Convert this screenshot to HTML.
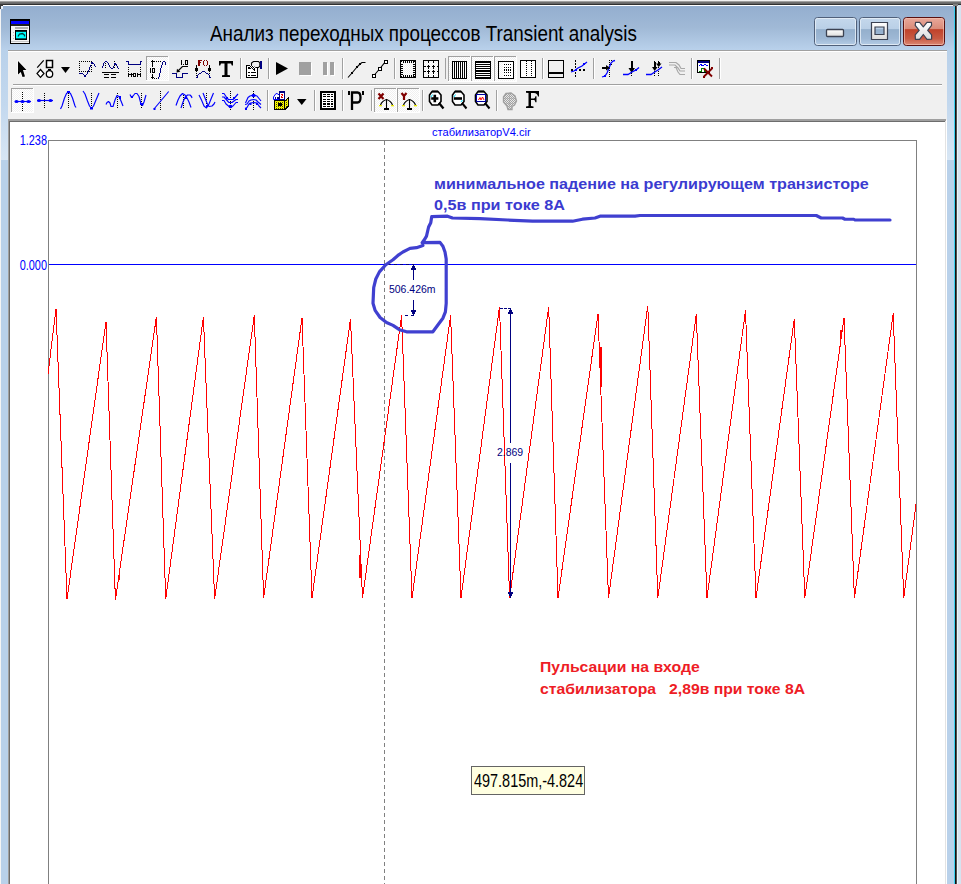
<!DOCTYPE html>
<html><head><meta charset="utf-8">
<style>
html,body{margin:0;padding:0;}
body{width:961px;height:884px;overflow:hidden;position:relative;background:#f0f0f0;font-family:"Liberation Sans",sans-serif;}
.a{position:absolute;white-space:nowrap;}
svg{position:absolute;left:0;top:0;}
#title{left:210px;top:21px;font-size:22px;line-height:26px;color:#000;transform-origin:0 0;transform:scaleX(0.856);}
#fname{left:432px;top:124.5px;font-size:11.5px;line-height:14px;color:#0000ff;transform-origin:0 0;transform:scaleX(0.965);}
.ylab{font-size:14px;line-height:14px;color:#0000ff;transform-origin:100% 0;transform:scaleX(0.78);text-align:right;}
.note{font-weight:bold;font-size:14.5px;line-height:18px;transform-origin:0 0;}
#n1{left:434px;top:175px;color:#3b3bd0;transform:scaleX(1.112);}
#n2{left:434px;top:196px;color:#3b3bd0;transform:scaleX(1.116);}
#n3{left:540px;top:658px;color:#ee1c25;transform:scaleX(1.087);}
#n4{left:540px;top:680px;color:#ee1c25;transform:scaleX(1.084);}
#tip{left:471px;top:766px;width:112px;height:27px;border:1px solid #646464;background:#ffffe1;}
#tipt{left:474px;top:770px;font-size:19px;line-height:22px;color:#000;transform-origin:0 0;transform:scaleX(0.76);}
.meas{font-size:11px;line-height:12px;color:#000080;transform-origin:0 0;transform:scaleX(0.95);}
</style></head><body>
<svg width="961" height="884" viewBox="0 0 961 884">
<defs>
<linearGradient id="gTitle" x1="0" y1="0" x2="0" y2="1">
<stop offset="0" stop-color="#93aecf"/><stop offset="0.5" stop-color="#a0b9d6"/><stop offset="1" stop-color="#b9d1eb"/>
</linearGradient>
<linearGradient id="gLeft" x1="0" y1="0" x2="0" y2="1"><stop offset="0" stop-color="#b9d1ea"/><stop offset="0.5" stop-color="#c3d8ee"/><stop offset="1" stop-color="#d8e6f4"/></linearGradient>
<pattern id="chk" x="0" y="0" width="2" height="2" patternUnits="userSpaceOnUse">
<rect width="2" height="2" fill="#ffffff"/><rect width="1" height="1" fill="#f0f0f0"/><rect x="1" y="1" width="1" height="1" fill="#f0f0f0"/>
</pattern>
<pattern id="dots" x="0" y="0" width="2" height="2" patternUnits="userSpaceOnUse">
<rect width="1" height="1" fill="#000"/>
</pattern>
<pattern id="gchk" x="0" y="0" width="2" height="2" patternUnits="userSpaceOnUse">
<rect width="2" height="2" fill="#e8e8e8"/><rect width="1" height="1" fill="#a0a0a0"/><rect x="1" y="1" width="1" height="1" fill="#a0a0a0"/>
</pattern>
<pattern id="bw" x="0" y="0" width="2" height="2" patternUnits="userSpaceOnUse">
<rect width="2" height="2" fill="#ffffff"/><rect width="1" height="1" fill="#000"/><rect x="1" y="1" width="1" height="1" fill="#000"/>
</pattern>
<pattern id="ychk" x="0" y="0" width="2" height="2" patternUnits="userSpaceOnUse">
<rect width="2" height="2" fill="#ffff00"/><rect width="1" height="1" fill="#404000"/><rect x="1" y="1" width="1" height="1" fill="#e0e000"/>
</pattern>
</defs>
<!-- screen strip -->
<g shape-rendering="crispEdges">
<rect x="0" y="0" width="961" height="1" fill="#f0f0f0"/>
<rect x="0" y="1" width="961" height="1" fill="#a0a0a0"/>
<rect x="0" y="2" width="961" height="1" fill="#707070"/>
<rect x="0" y="3" width="961" height="1" fill="#656565"/>
<rect x="0" y="4" width="961" height="1" fill="#303030"/>
<rect x="0" y="5" width="957" height="45" fill="url(#gTitle)"/>
<rect x="3" y="5" width="952" height="1" fill="#ffffff"/>
<rect x="0" y="4" width="3" height="5" fill="#3a3a3a"/><rect x="1" y="6" width="2" height="3" fill="#e8eef6"/>
<rect x="0" y="50" width="8" height="834" fill="#b9d1ea"/>
<rect x="1" y="50" width="7" height="110" fill="url(#gLeft)"/>
<rect x="0" y="9" width="1" height="875" fill="#f5f5f5"/>
<rect x="947" y="50" width="8" height="834" fill="#b9d1ea"/>
<rect x="947" y="50" width="7" height="110" fill="url(#gLeft)"/>
<rect x="954" y="7" width="1" height="877" fill="#3ad0f0"/>
<rect x="955" y="5" width="1" height="879" fill="#111111"/>
<rect x="956" y="5" width="1" height="879" fill="#505050"/>
<rect x="957" y="5" width="4" height="879" fill="#d6e3f0"/>
<rect x="957" y="5" width="1" height="879" fill="#eef3f8"/>
<rect x="953" y="4" width="5" height="2" fill="#808080"/>
<rect x="8" y="50" width="939" height="70" fill="#f0f0f0"/>
<rect x="8" y="50" width="939" height="1" fill="#a0a0a0"/>
<rect x="8" y="51" width="939" height="1" fill="#ffffff"/>
<rect x="13" y="84" width="929" height="1" fill="#a0a0a0"/>
<rect x="13" y="85" width="929" height="1" fill="#ffffff"/>
<rect x="8" y="119" width="938" height="765" fill="#a0a0a0"/>
<rect x="9" y="121" width="937" height="763" fill="#6d6d6d"/>
<rect x="10" y="122" width="935" height="762" fill="#ffffff"/>
<rect x="945" y="121" width="1" height="763" fill="#e3e3e3"/>
<rect x="946" y="120" width="1" height="764" fill="#ffffff"/>
</g>
<g shape-rendering="crispEdges"><g id="tb1">
<!-- selected button backgrounds -->
<rect x="146" y="56" width="22" height="24" fill="url(#chk)"/>
<rect x="146" y="56" width="22" height="1" fill="#a0a0a0"/><rect x="146" y="56" width="1" height="24" fill="#a0a0a0"/>
<rect x="146" y="80" width="23" height="1" fill="#fff"/><rect x="168" y="56" width="1" height="25" fill="#fff"/>
<rect x="448" y="56" width="22" height="25" fill="url(#chk)"/>
<rect x="448" y="56" width="22" height="1" fill="#a0a0a0"/><rect x="448" y="56" width="1" height="25" fill="#a0a0a0"/>
<rect x="448" y="81" width="23" height="1" fill="#fff"/><rect x="470" y="56" width="1" height="26" fill="#fff"/>
<rect x="471" y="56" width="22" height="25" fill="url(#chk)"/>
<rect x="471" y="56" width="22" height="1" fill="#a0a0a0"/><rect x="471" y="56" width="1" height="25" fill="#a0a0a0"/>
<rect x="471" y="81" width="23" height="1" fill="#fff"/><rect x="493" y="56" width="1" height="26" fill="#fff"/>
<rect x="494" y="56" width="22" height="25" fill="url(#chk)"/>
<rect x="494" y="56" width="22" height="1" fill="#a0a0a0"/><rect x="494" y="56" width="1" height="25" fill="#a0a0a0"/>
<rect x="494" y="81" width="23" height="1" fill="#fff"/><rect x="516" y="56" width="1" height="26" fill="#fff"/>
<!-- separators -->
<g fill="#a0a0a0">
<rect x="240" y="58" width="1" height="21"/><rect x="268" y="58" width="1" height="21"/>
<rect x="342" y="58" width="1" height="21"/><rect x="394" y="58" width="1" height="21"/>
<rect x="445" y="58" width="1" height="21"/><rect x="542" y="58" width="1" height="21"/>
<rect x="593" y="58" width="1" height="21"/><rect x="691" y="58" width="1" height="21"/>
<rect x="719" y="58" width="1" height="21"/>
</g>
<g fill="#ffffff">
<rect x="241" y="58" width="1" height="21"/><rect x="269" y="58" width="1" height="21"/>
<rect x="343" y="58" width="1" height="21"/><rect x="395" y="58" width="1" height="21"/>
<rect x="543" y="58" width="1" height="21"/>
<rect x="594" y="58" width="1" height="21"/><rect x="692" y="58" width="1" height="21"/>
<rect x="720" y="58" width="1" height="21"/>
</g>
<!-- 1 arrow -->
<polygon points="18,61 26.5,70 23,70 25,76.5 22.5,77 20.8,72 18,74.5" fill="#000" stroke="#fff" stroke-width="1.2" paint-order="stroke" stroke-linejoin="round" shape-rendering="auto"/>
<!-- 2 shapes -->
<g shape-rendering="auto">
<line x1="37.2" y1="67.6" x2="43.7" y2="60.4" stroke="#000" stroke-width="1.2"/>
<rect x="46.5" y="60.5" width="6" height="7" fill="#fff" stroke="#000" stroke-width="1.5"/>
<polygon points="40.5,69.5 44,73.5 40.5,77.3 37,73.5" fill="#fff" stroke="#000" stroke-width="1.2"/>
<ellipse cx="49.5" cy="74" rx="3.2" ry="3.4" fill="#fff" stroke="#000" stroke-width="1.3"/>
<rect x="48" y="69" width="3" height="1.5" fill="#000"/>
</g>
<!-- 3 dropdown -->
<polygon points="61,67 70,67 65.5,73" fill="#000" shape-rendering="auto"/>
<!-- 4 dotted rect + curve -->
<rect x="79" y="61" width="1" height="1" fill="#000"/>
<rect x="79" y="71" width="1" height="1" fill="#000"/>
<rect x="81" y="61" width="1" height="1" fill="#000"/>
<rect x="81" y="71" width="1" height="1" fill="#000"/>
<rect x="83" y="61" width="1" height="1" fill="#000"/>
<rect x="83" y="71" width="1" height="1" fill="#000"/>
<rect x="85" y="61" width="1" height="1" fill="#000"/>
<rect x="85" y="71" width="1" height="1" fill="#000"/>
<rect x="87" y="61" width="1" height="1" fill="#000"/>
<rect x="87" y="71" width="1" height="1" fill="#000"/>
<rect x="89" y="61" width="1" height="1" fill="#000"/>
<rect x="89" y="71" width="1" height="1" fill="#000"/>
<rect x="91" y="61" width="1" height="1" fill="#000"/>
<rect x="91" y="71" width="1" height="1" fill="#000"/>
<rect x="79" y="63" width="1" height="1" fill="#000"/>
<rect x="91" y="63" width="1" height="1" fill="#000"/>
<rect x="79" y="65" width="1" height="1" fill="#000"/>
<rect x="91" y="65" width="1" height="1" fill="#000"/>
<rect x="79" y="67" width="1" height="1" fill="#000"/>
<rect x="91" y="67" width="1" height="1" fill="#000"/>
<rect x="79" y="69" width="1" height="1" fill="#000"/>
<rect x="91" y="69" width="1" height="1" fill="#000"/>
<rect x="79" y="73" width="4" height="1" fill="#000080"/>
<rect x="83" y="74" width="1" height="1" fill="#000080"/>
<rect x="84" y="75" width="2" height="2" fill="#000080"/>
<rect x="86" y="74" width="1" height="1" fill="#000080"/>
<rect x="87" y="72" width="1" height="2" fill="#000080"/>
<rect x="88" y="70" width="1" height="2" fill="#000080"/>
<rect x="89" y="67" width="1" height="3" fill="#000080"/>
<rect x="90" y="65" width="1" height="2" fill="#000080"/>
<rect x="91" y="62" width="2" height="2" fill="#000080"/>
<rect x="93" y="63" width="1" height="1" fill="#000080"/>
<rect x="94" y="64" width="1" height="2" fill="#000080"/>
<rect x="95" y="66" width="1" height="1" fill="#000080"/>
<rect x="105" y="61" width="1" height="1" fill="#000"/>
<rect x="114" y="61" width="1" height="1" fill="#000"/>
<rect x="105" y="63" width="1" height="1" fill="#000"/>
<rect x="114" y="63" width="1" height="1" fill="#000"/>
<rect x="105" y="65" width="1" height="1" fill="#000"/>
<rect x="114" y="65" width="1" height="1" fill="#000"/>
<rect x="105" y="67" width="1" height="1" fill="#000"/>
<rect x="114" y="67" width="1" height="1" fill="#000"/>
<rect x="102" y="66" width="1" height="2" fill="#000080"/>
<rect x="103" y="63" width="1" height="3" fill="#000080"/>
<rect x="104" y="62" width="1" height="1" fill="#000080"/>
<rect x="105" y="61" width="2" height="1" fill="#000080"/>
<rect x="107" y="62" width="1" height="1" fill="#000080"/>
<rect x="108" y="63" width="1" height="2" fill="#000080"/>
<rect x="109" y="65" width="1" height="2" fill="#000080"/>
<rect x="110" y="67" width="1" height="1" fill="#000080"/>
<rect x="111" y="68" width="2" height="1" fill="#000080"/>
<rect x="113" y="66" width="1" height="2" fill="#000080"/>
<rect x="114" y="63" width="2" height="2" fill="#000080"/>
<rect x="116" y="64" width="1" height="2" fill="#000080"/>
<rect x="117" y="66" width="1" height="2" fill="#000080"/>
<rect x="118" y="68" width="1" height="1" fill="#000080"/>
<rect x="102" y="72" width="17" height="1" fill="#000"/>
<rect x="104" y="74" width="5" height="1" fill="#000"/>
<rect x="111" y="74" width="5" height="1" fill="#000"/>
<rect x="104" y="77" width="5" height="1" fill="#000"/>
<rect x="111" y="77" width="5" height="1" fill="#000"/>
<rect x="126" y="61" width="3" height="1" fill="#000080"/>
<rect x="128" y="61" width="1" height="4" fill="#000080"/>
<rect x="128" y="64" width="13" height="1" fill="#000080"/>
<rect x="140" y="61" width="1" height="4" fill="#000080"/>
<rect x="140" y="61" width="2" height="1" fill="#000080"/>
<rect x="128" y="67" width="1" height="1" fill="#000"/>
<rect x="140" y="67" width="1" height="1" fill="#000"/>
<rect x="128" y="69" width="1" height="1" fill="#000"/>
<rect x="140" y="69" width="1" height="1" fill="#000"/>
<rect x="128" y="71" width="1" height="1" fill="#000"/>
<rect x="140" y="71" width="1" height="1" fill="#000"/>
<rect x="128" y="73" width="1" height="4" fill="#000"/>
<rect x="128" y="74" width="5" height="1" fill="#000"/>
<rect x="131" y="73" width="1" height="4" fill="#000"/>
<rect x="133" y="73" width="3" height="4" fill="#000"/>
<rect x="137" y="74" width="4" height="1" fill="#000"/>
<rect x="137" y="73" width="1" height="4" fill="#000"/>
<rect x="140" y="73" width="1" height="4" fill="#000"/>
<rect x="134" y="74" width="1" height="2" fill="#f0f0f0"/>
<!-- 7 selected: 10 + S -->
<g fill="#000">
<rect x="151" y="61" width="3" height="1"/><rect x="152" y="60" width="1" height="7"/>
<rect x="154" y="61" width="1" height="1"/><rect x="156" y="61" width="1" height="1"/><rect x="158" y="61" width="1" height="1"/><rect x="160" y="61" width="1" height="1"/>
<rect x="150" y="68" width="1" height="5"/>
<rect x="152" y="68" width="3" height="5"/>
<rect x="152" y="74" width="1" height="5"/><rect x="151" y="77" width="3" height="1"/>
<rect x="154" y="78" width="1" height="1"/><rect x="156" y="78" width="1" height="1"/>
</g>
<rect x="153" y="69" width="1" height="3" fill="#f4f4f4"/>
<g fill="#000080">
<rect x="158" y="77" width="1" height="2"/><rect x="159" y="73" width="1" height="4"/><rect x="160" y="68" width="1" height="5"/>
<rect x="161" y="65" width="1" height="3"/><rect x="162" y="62" width="1" height="3"/><rect x="163" y="61" width="2" height="1"/><rect x="165" y="62" width="1" height="3"/>
</g>
<!-- 8 1.0 pulse -->
<g fill="#000">
<rect x="181" y="60" width="1" height="5"/>
<rect x="183" y="64" width="1" height="1"/>
<rect x="185" y="60" width="3" height="5"/>
<rect x="182" y="66" width="6" height="1"/>
</g>
<rect x="186" y="61" width="1" height="3" fill="#f0f0f0"/>
<g shape-rendering="auto">
<line x1="182.5" y1="66.5" x2="178" y2="71" stroke="#000" stroke-width="1.1"/>
<polygon points="176.5,72.5 177,68.8 180.3,71.8" fill="#000"/>
</g>
<path d="M172,73.5 L176.5,73.5 L176.5,77.5 L182.5,77.5 L182.5,73.5 L188,73.5" fill="none" stroke="#000080" stroke-width="1"/>
<!-- 9 F() -->
<g fill="#800000">
<rect x="198" y="60" width="2" height="6"/><rect x="198" y="60" width="4" height="1"/><rect x="198" y="62" width="3" height="1"/>
<rect x="203" y="61" width="1" height="4"/><rect x="204" y="60" width="1" height="1"/><rect x="204" y="65" width="1" height="1"/>
<rect x="207" y="61" width="1" height="4"/><rect x="206" y="60" width="1" height="1"/><rect x="206" y="65" width="1" height="1"/>
</g>
<g fill="#000">
<rect x="196" y="65" width="1" height="3"/><rect x="195" y="68" width="3" height="3"/><rect x="196" y="71" width="1" height="1"/><rect x="196" y="73" width="1" height="1"/><rect x="196" y="75" width="1" height="1"/>
<rect x="209" y="65" width="1" height="3"/><rect x="208" y="68" width="3" height="3"/><rect x="209" y="71" width="1" height="1"/><rect x="209" y="73" width="1" height="1"/><rect x="209" y="75" width="1" height="1"/>
</g>
<g fill="#000080">
<rect x="196" y="77" width="2" height="1"/><rect x="197" y="75" width="1" height="2"/><rect x="198" y="74" width="1" height="1"/><rect x="199" y="73" width="2" height="1"/><rect x="201" y="72" width="1" height="1"/><rect x="202" y="71" width="3" height="1"/><rect x="205" y="72" width="1" height="1"/><rect x="206" y="73" width="2" height="1"/><rect x="208" y="74" width="1" height="1"/><rect x="209" y="75" width="1" height="2"/><rect x="209" y="77" width="2" height="1"/>
</g>
<!-- 10 T -->
<path d="M219,61 L233,61 L233,65.5 L231.8,65.5 L231,63.5 L227.5,63.5 L227.5,75 L230,75.3 L230,77 L222,77 L222,75.3 L224.5,75 L224.5,63.5 L221,63.5 L220.2,65.5 L219,65.5 Z" fill="#000" shape-rendering="auto"/>
<!-- 12 properties -->
<rect x="246.5" y="65.5" width="11" height="12" fill="#fff" stroke="#000" stroke-width="1.2"/>
<rect x="248" y="72" width="2" height="1" fill="#000"/><rect x="251" y="72" width="5" height="1" fill="#000"/>
<rect x="248" y="74.5" width="2" height="1" fill="#000"/><rect x="251" y="74.5" width="5" height="1" fill="#000"/>
<polygon points="247.5,68 251.5,63.5 256.5,67.5 254.5,70.5" fill="url(#bw)"/>
<path d="M251.5,65 L251.5,63 L253.5,61.5 L258.5,61.5 L259.8,63 L259.8,66 L258.5,67.5 L256,67.5" fill="#f0f0f0" stroke="#000" stroke-width="1.1" shape-rendering="auto"/>
<rect x="248" y="67" width="2" height="2" fill="#000"/><rect x="254" y="69" width="1" height="2" fill="#000"/>
<rect x="260" y="61" width="2" height="8" fill="#000080"/>
<!-- 14 play -->
<polygon points="276,62 288,68.5 276,75" fill="#000" shape-rendering="auto"/>
<!-- 15 stop, 16 pause -->
<rect x="300" y="63" width="12" height="13" fill="#fff"/>
<rect x="299" y="62" width="12" height="13" fill="#a0a0a0"/>
<rect x="324" y="63" width="4" height="13" fill="#fff"/><rect x="331" y="63" width="4" height="13" fill="#fff"/>
<rect x="323" y="62" width="4" height="13" fill="#a0a0a0"/><rect x="330" y="62" width="4" height="13" fill="#a0a0a0"/>
<!-- 18 line1 -->
<polyline points="348,77.5 352,73 357,67 360,64 362,62.5 365.5,62.5" fill="none" stroke="#000" stroke-width="1.1" shape-rendering="auto"/>
<rect x="351" y="72" width="2" height="2" fill="#000"/><rect x="356" y="66" width="2" height="2" fill="#000"/><rect x="359" y="63" width="2" height="2" fill="#000"/>
<!-- 19 line2 -->
<polyline points="373.5,76 379.5,69 385.7,61.3" fill="none" stroke="#000" stroke-width="1.1" shape-rendering="auto"/>
<rect x="372" y="74" width="3" height="3" fill="#fff" stroke="#000" stroke-width="1"/>
<rect x="378" y="67.5" width="3" height="3" fill="#fff" stroke="#000" stroke-width="1"/>
<rect x="384" y="60" width="3" height="3" fill="#fff" stroke="#000" stroke-width="1"/>
<!-- 21 box ticks -->
<rect x="400" y="60" width="16" height="18" fill="#000"/>
<rect x="401" y="61" width="14" height="16" fill="url(#chk)"/>
<rect x="403" y="61" width="1" height="2" fill="#000"/>
<rect x="403" y="75" width="1" height="2" fill="#000"/>
<rect x="405" y="61" width="1" height="2" fill="#000"/>
<rect x="405" y="75" width="1" height="2" fill="#000"/>
<rect x="407" y="61" width="1" height="2" fill="#000"/>
<rect x="407" y="75" width="1" height="2" fill="#000"/>
<rect x="409" y="61" width="1" height="2" fill="#000"/>
<rect x="409" y="75" width="1" height="2" fill="#000"/>
<rect x="411" y="61" width="1" height="2" fill="#000"/>
<rect x="411" y="75" width="1" height="2" fill="#000"/>
<rect x="413" y="61" width="1" height="2" fill="#000"/>
<rect x="413" y="75" width="1" height="2" fill="#000"/>
<rect x="401" y="64" width="2" height="1" fill="#000"/>
<rect x="413" y="64" width="2" height="1" fill="#000"/>
<rect x="401" y="66" width="2" height="1" fill="#000"/>
<rect x="413" y="66" width="2" height="1" fill="#000"/>
<rect x="401" y="68" width="2" height="1" fill="#000"/>
<rect x="413" y="68" width="2" height="1" fill="#000"/>
<rect x="401" y="70" width="2" height="1" fill="#000"/>
<rect x="413" y="70" width="2" height="1" fill="#000"/>
<rect x="401" y="72" width="2" height="1" fill="#000"/>
<rect x="413" y="72" width="2" height="1" fill="#000"/>
<rect x="401" y="74" width="2" height="1" fill="#000"/>
<rect x="413" y="74" width="2" height="1" fill="#000"/>
<rect x="401" y="61" width="1" height="1" fill="#000"/>
<rect x="414" y="61" width="1" height="1" fill="#000"/>
<rect x="401" y="76" width="1" height="1" fill="#000"/>
<rect x="414" y="76" width="1" height="1" fill="#000"/>
<rect x="423" y="60" width="16" height="18" fill="#000"/>
<rect x="424" y="61" width="14" height="16" fill="url(#chk)"/>
<rect x="428" y="61" width="1" height="2" fill="#000"/>
<rect x="428" y="65" width="1" height="4" fill="#000"/>
<rect x="428" y="70" width="1" height="4" fill="#000"/>
<rect x="428" y="75" width="1" height="2" fill="#000"/>
<rect x="433" y="61" width="1" height="2" fill="#000"/>
<rect x="433" y="65" width="1" height="4" fill="#000"/>
<rect x="433" y="70" width="1" height="4" fill="#000"/>
<rect x="433" y="75" width="1" height="2" fill="#000"/>
<rect x="424" y="66" width="2" height="1" fill="#000"/>
<rect x="427" y="66" width="3" height="1" fill="#000"/>
<rect x="432" y="66" width="3" height="1" fill="#000"/>
<rect x="437" y="66" width="1" height="1" fill="#000"/>
<rect x="424" y="71" width="2" height="1" fill="#000"/>
<rect x="427" y="71" width="3" height="1" fill="#000"/>
<rect x="432" y="71" width="3" height="1" fill="#000"/>
<rect x="437" y="71" width="1" height="1" fill="#000"/>
<!-- 24 vertical stripes -->
<rect x="452" y="61" width="15" height="18" fill="#000"/>
<g fill="#fff"><rect x="453" y="62" width="1" height="16"/><rect x="455" y="62" width="1" height="16"/><rect x="457" y="62" width="1" height="16"/><rect x="459" y="62" width="1" height="16"/><rect x="461" y="62" width="1" height="16"/><rect x="463" y="62" width="1" height="16"/><rect x="465" y="62" width="1" height="16"/></g>
<!-- 25 horizontal stripes -->
<rect x="475" y="61" width="16" height="18" fill="#000"/>
<g fill="#fff"><rect x="476" y="63" width="14" height="1"/><rect x="476" y="65" width="14" height="1"/><rect x="476" y="67" width="14" height="1"/><rect x="476" y="69" width="14" height="1"/><rect x="476" y="72" width="14" height="1"/><rect x="476" y="74" width="14" height="1"/><rect x="476" y="76" width="14" height="1"/></g>
<!-- 26 half dotted -->
<rect x="498.5" y="61.5" width="15" height="17" fill="#fff" stroke="#000" stroke-width="1.5"/>
<rect x="499" y="62" width="4" height="16" fill="url(#chk)"/>
<g fill="#000"><rect x="504" y="64" width="1" height="1"/><rect x="506" y="64" width="1" height="1"/><rect x="508" y="64" width="1" height="1"/><rect x="510" y="64" width="1" height="1"/>
<rect x="504" y="67" width="1" height="1"/><rect x="506" y="67" width="1" height="1"/><rect x="508" y="67" width="1" height="1"/><rect x="510" y="67" width="1" height="1"/>
<rect x="504" y="69" width="1" height="2"/><rect x="506" y="69" width="1" height="2"/><rect x="508" y="69" width="1" height="2"/><rect x="510" y="69" width="1" height="2"/>
<rect x="504" y="72" width="1" height="1"/><rect x="506" y="72" width="1" height="1"/><rect x="508" y="72" width="1" height="1"/><rect x="510" y="72" width="1" height="1"/>
<rect x="504" y="75" width="1" height="1"/><rect x="506" y="75" width="1" height="1"/><rect x="508" y="75" width="1" height="1"/><rect x="510" y="75" width="1" height="1"/></g>
<!-- 27 box dotted verticals -->
<rect x="520.5" y="60.5" width="15" height="17" fill="#fff" stroke="#000" stroke-width="1.5"/>
<line x1="526.5" y1="61" x2="526.5" y2="77" stroke="#000" stroke-dasharray="1 1"/>
<line x1="531.5" y1="61" x2="531.5" y2="77" stroke="#000" stroke-dasharray="1 1"/>
<!-- 29 window bottom pane -->
<rect x="548.5" y="60.5" width="15" height="17" fill="#f0f0f0" stroke="#000" stroke-width="1.5"/>
<rect x="549" y="72" width="14" height="1.5" fill="#000"/>
<!-- 30 crosshair slope -->
<line x1="575.5" y1="60" x2="575.5" y2="77" stroke="#000" stroke-dasharray="1.5 1.5"/>
<g fill="#000"><rect x="571" y="69" width="2" height="2"/><rect x="579" y="69" width="2" height="2"/><rect x="583" y="69" width="2" height="2"/></g>
<path d="M571,72 L574,71 L578,68 L582,66 L587,62" fill="none" stroke="#0000ff" stroke-width="1.2" shape-rendering="auto"/>
<rect x="575" y="69" width="2" height="2" fill="#0000ff"/><rect x="583" y="63" width="2" height="2" fill="#0000ff"/>
<!-- 32 arrow right into curve -->
<line x1="609.5" y1="60" x2="609.5" y2="77" stroke="#000" stroke-dasharray="1 1"/>
<line x1="611.5" y1="60" x2="611.5" y2="66" stroke="#000" stroke-dasharray="1 1"/>
<path d="M602,77 L605,76 L607,73 L609,68 L611,63 L613,61 L615,60.5" fill="none" stroke="#0000ff" stroke-width="1.3" shape-rendering="auto"/>
<rect x="602" y="67" width="6" height="1.5" fill="#000"/><polygon points="610,67.8 606,65 606,70.5" fill="#000" shape-rendering="auto"/>
<rect x="604" y="75" width="2" height="2" fill="#0000ff"/>
<!-- 33 arrow down -->
<line x1="631.5" y1="61" x2="631.5" y2="77" stroke="#000" stroke-dasharray="1 1"/>
<rect x="631" y="61" width="1.5" height="8" fill="#000"/><polygon points="631.7,73 628.5,68 635,68" fill="#000" shape-rendering="auto"/>
<path d="M623,74.5 L628,74.5 L632,72 L636,70 L639,67.5" fill="none" stroke="#0000ff" stroke-width="1.3" shape-rendering="auto"/>
<rect x="635" y="69" width="2" height="2" fill="#0000ff"/>
<!-- 34 two arrows down -->
<line x1="654.5" y1="61" x2="654.5" y2="77" stroke="#000" stroke-dasharray="1 1"/>
<line x1="658.5" y1="61" x2="658.5" y2="77" stroke="#000" stroke-dasharray="1 1"/>
<rect x="654" y="62" width="1.5" height="6" fill="#000"/><polygon points="654.7,71 652,67 657.5,67" fill="#000" shape-rendering="auto"/>
<rect x="658" y="62" width="1.5" height="3" fill="#000"/><polygon points="658.7,67 656,63.5 661.5,63.5" fill="#000" shape-rendering="auto"/>
<path d="M646,74.5 L651,74.5 L654,72.5 L658,70 L662,67" fill="none" stroke="#0000ff" stroke-width="1.3" shape-rendering="auto"/>
<!-- 35 gray icon -->
<path d="M669,62.5 L676,62.5 L679,65 L681,68.5 L685,68.5 M669,65 L675,65 L678,68 L680,71 L685,71 M674,67.5 L676,67.5 L678,72 L680,74.5 L685,74.5" fill="none" stroke="#a8a8a8" stroke-width="1.2" shape-rendering="auto"/>
<!-- 37 scope icon -->
<rect x="697.5" y="60.5" width="12" height="12" fill="#fff" stroke="#000" stroke-width="1"/>
<rect x="698" y="61" width="11" height="2" fill="#000080"/>
<path d="M699,66 L701,64.5 L703,66 L705,64.5 L708,66" fill="none" stroke="#0000ff" stroke-width="1"/>
<path d="M699,71 L701,71 L701,68 L704,68 L704,71 L708,71" fill="none" stroke="#008000" stroke-width="1"/>
<path d="M704,68.5 L712,76.5 M712,68.5 L704,76.5 M705,77 L703,77 M711,68 L713,68" fill="none" stroke="#800000" stroke-width="1.8" shape-rendering="auto"/>
</g>
<g id="tb2">
<!-- selected boxes -->
<rect x="11" y="88" width="22" height="24" fill="url(#chk)"/>
<rect x="11" y="88" width="22" height="1" fill="#a0a0a0"/><rect x="11" y="88" width="1" height="24" fill="#a0a0a0"/>
<rect x="11" y="112" width="23" height="1" fill="#fff"/><rect x="33" y="88" width="1" height="25" fill="#fff"/>
<rect x="374" y="88" width="22" height="24" fill="url(#chk)"/>
<rect x="374" y="88" width="22" height="1" fill="#a0a0a0"/><rect x="374" y="88" width="1" height="24" fill="#a0a0a0"/>
<rect x="374" y="112" width="23" height="1" fill="#fff"/><rect x="396" y="88" width="1" height="25" fill="#fff"/>
<rect x="397" y="88" width="22" height="24" fill="url(#chk)"/>
<rect x="397" y="88" width="22" height="1" fill="#a0a0a0"/><rect x="397" y="88" width="1" height="24" fill="#a0a0a0"/>
<rect x="397" y="112" width="23" height="1" fill="#fff"/><rect x="419" y="88" width="1" height="25" fill="#fff"/>
<!-- separators -->
<g fill="#a0a0a0"><rect x="267" y="90" width="1" height="21"/><rect x="314" y="90" width="1" height="21"/><rect x="342" y="90" width="1" height="21"/><rect x="371" y="90" width="1" height="21"/><rect x="422" y="90" width="1" height="21"/><rect x="496" y="90" width="1" height="21"/></g>
<g fill="#fff"><rect x="268" y="90" width="1" height="21"/><rect x="315" y="90" width="1" height="21"/><rect x="343" y="90" width="1" height="21"/><rect x="372" y="90" width="1" height="21"/><rect x="423" y="90" width="1" height="21"/><rect x="497" y="90" width="1" height="21"/></g>
<!-- dotted verticals -->
<g stroke="#000" stroke-dasharray="1 1">
<line x1="22.5" y1="92" x2="22.5" y2="111"/>
<line x1="44.5" y1="93" x2="44.5" y2="108"/>
<line x1="68.5" y1="93" x2="68.5" y2="108"/>
<line x1="91.5" y1="93" x2="91.5" y2="108"/>
<line x1="117.5" y1="93" x2="117.5" y2="108"/>
<line x1="141.5" y1="93" x2="141.5" y2="108"/>
<line x1="160.5" y1="91" x2="160.5" y2="110"/>
<line x1="183.5" y1="95" x2="183.5" y2="108"/>
<line x1="206.5" y1="93" x2="206.5" y2="108"/>
<line x1="230.5" y1="91" x2="230.5" y2="110"/>
<line x1="253.5" y1="91" x2="253.5" y2="110"/>
</g>
<g fill="none" stroke="#0000ff" stroke-width="1.15" shape-rendering="auto" stroke-linejoin="round">
<line x1="15" y1="101.5" x2="31" y2="101.5"/>
<line x1="37" y1="100.5" x2="53" y2="100.5"/>
<path d="M60.5,109 L62,106 L64.5,98 L66.5,93.5 L68.5,92 L70.5,93.5 L72.5,98 L75,106 L76,107.5"/>
<path d="M83,91 L85,94 L87.5,101 L89.5,106 L91.5,108.5 L93.5,106 L96,100 L99,93"/>
<path d="M106,104.5 L107,102.5 L108.5,101.5 L110,103 L111,106.5 L113,106.5 L115,100 L117,95.5 L119,96.5 L121,101 L123,106"/>
<path d="M130,94.5 L131.5,97.5 L133,96 L135,93.5 L137,93.5 L139,96.5 L141,104 L142.5,105.5 L144,102 L146,95"/>
<line x1="154" y1="109" x2="168.7" y2="91.5"/>
<path d="M176,105.5 L178,100 L180,96 L182.5,93.5 L185,95 L187,98 L189,102 L191,107.5"/>
<path d="M181,108 L183,102 L185,97.5 L187.5,95 L190,95 L191.5,96.5 L192,98"/>
<path d="M199,95 L201.5,100 L204,106 L206.5,108 L209,104 L211,99 L213.5,93"/>
<path d="M203,93 L205,98 L207,103 L209,106.5 L212,106 L214,104 L215,102"/>
<path d="M222,93.5 L224,93.5 L227,98 L228.5,99.5 L233,99.5 L234.5,98 L238,94"/>
<path d="M222,97 L224,97 L228,101.5 L229,102.5 L232,102.5 L236,99.5 L238,99.5"/>
<path d="M222,100.5 L224,100.5 L226,104 L228.5,106 L230.5,107 L233,106 L236,102.5 L238,102.5"/>
<path d="M245.5,103 L248,97.5 L250,96 L253.5,95 L257,96 L259,98.5 L261,101"/>
<path d="M245,104.5 L247,104 L249,101 L251,100 L253.5,99.5 L256,100 L258,102 L261,104.5"/>
<path d="M245,108.5 L247,107.5 L249,104 L250.5,103 L253.5,102.5 L257,103 L259,106 L261,108"/>
</g>
<g fill="#0000ff" shape-rendering="auto">
<ellipse cx="16.5" cy="101.5" rx="2" ry="1.5"/><ellipse cx="22.5" cy="101.5" rx="2" ry="1.5"/><ellipse cx="28.5" cy="101.5" rx="2" ry="1.5"/>
<ellipse cx="39" cy="100.5" rx="2" ry="1.5"/><ellipse cx="50.5" cy="100.5" rx="2" ry="1.5"/>
<rect x="67" y="91" width="3" height="2"/>
<rect x="90" y="107.5" width="3" height="2"/>
<rect x="119" y="96" width="2" height="3"/>
<rect x="131" y="96" width="2" height="2"/>
<rect x="140" y="103" width="3" height="2"/>
<rect x="153.5" y="108" width="2" height="2"/>
<rect x="185" y="97" width="2" height="2"/>
<rect x="206" y="105" width="2" height="2"/>
<rect x="226" y="97" width="2" height="2"/><rect x="233" y="97" width="2" height="2"/><ellipse cx="230.5" cy="106.5" rx="2" ry="1.7"/>
<ellipse cx="253.5" cy="95.5" rx="2" ry="1.7"/><rect x="249.5" y="103" width="2" height="2"/><rect x="256" y="103" width="2" height="2"/><rect x="245" y="108" width="2" height="2"/>
</g>
<!-- box icon -->
<polygon points="274,100 285,100 289,96 289,106 285,110 274,110" fill="#000"/>
<rect x="275" y="101" width="9" height="8" fill="url(#ychk)"/>
<rect x="278" y="103" width="4" height="3" fill="#000"/>
<polygon points="285,101 288,98 288,105.5 285,108.5" fill="url(#ychk)"/>
<polygon points="273.5,99.5 273.5,97 276,93.5 278,94 281,97 281,99.5" fill="#fff" stroke="#0000ff" stroke-width="1" shape-rendering="auto"/>
<rect x="275" y="97" width="1" height="2" fill="#000080"/><rect x="277" y="97" width="2" height="2" fill="#000080"/>
<rect x="279" y="91" width="6" height="9" fill="#000080"/>
<rect x="280" y="93" width="4" height="6" fill="#fff"/>
<rect x="281" y="94" width="2" height="1" fill="#e00000"/><rect x="282" y="95" width="1" height="1" fill="#e00000"/><rect x="281" y="96" width="1" height="2" fill="#e00000"/><rect x="282" y="97" width="1" height="1" fill="#e00000"/>
<!-- dropdown -->
<polygon points="297,99 306.5,99 301.75,105" fill="#000" shape-rendering="auto"/>
<!-- table -->
<rect x="320" y="91" width="16" height="19" fill="#000"/>
<rect x="322" y="93" width="12" height="15" fill="#fff"/>
<g fill="#000">
<rect x="323" y="94" width="3" height="1"/><rect x="327" y="94" width="3" height="1"/><rect x="331" y="94" width="2" height="1"/>
<rect x="323" y="96" width="3" height="1"/><rect x="327" y="96" width="3" height="1"/><rect x="331" y="96" width="2" height="1"/>
<rect x="323" y="99" width="3" height="1"/><rect x="327" y="99" width="3" height="1"/><rect x="331" y="99" width="2" height="1"/>
<rect x="323" y="101" width="3" height="1"/><rect x="327" y="101" width="3" height="1"/><rect x="331" y="101" width="2" height="1"/>
<rect x="323" y="103" width="3" height="2"/><rect x="327" y="103" width="3" height="2"/><rect x="331" y="103" width="2" height="2"/>
<rect x="323" y="106" width="3" height="1"/><rect x="327" y="106" width="3" height="1"/><rect x="331" y="106" width="2" height="1"/>
</g>
<!-- 'P' -->
<rect x="348" y="91" width="1.5" height="4" fill="#000"/><rect x="362" y="91" width="1.5" height="4" fill="#000"/>
<path d="M352,110 L352,92.5 L357.5,92.5 Q360.5,92.5 360.5,97.5 Q360.5,102.5 357.5,102.5 L352,102.5" fill="none" stroke="#000" stroke-width="2.3" shape-rendering="auto"/>
<!-- X balance -->
<g shape-rendering="auto">
<path d="M378.5,93.5 L383.5,99 M383.5,93.5 L378.5,99" stroke="#800000" stroke-width="2.2"/>
<path d="M401.5,93 L404,96 L406.5,93 M404,96 L404,100" stroke="#800000" stroke-width="2.2" fill="none"/>
<g fill="none" stroke="#000" stroke-width="1.1">
<path d="M380.5,105 Q382,101 386.5,99.5 Q391,101 392.5,105"/>
<line x1="386.5" y1="99" x2="386.5" y2="109"/>
<path d="M403.5,105 Q405,101 409.5,99.5 Q414,101 415.5,105"/>
<line x1="409.5" y1="99" x2="409.5" y2="109"/>
</g>
<rect x="384" y="108" width="5" height="2" fill="#000"/><rect x="407" y="108" width="5" height="2" fill="#000"/>
<g fill="#e8e800"><rect x="379" y="105" width="3" height="1.3"/><rect x="391" y="105" width="3" height="1.3"/><rect x="402" y="105" width="3" height="1.3"/><rect x="414" y="105" width="3" height="1.3"/></g>
</g>
<!-- zoom icons -->
<g shape-rendering="auto">
<polygon points="432,91.5 438,91.5 441,95 441,101.5 438,105 432,105 429.5,101.5 429.5,95" fill="#fff" stroke="#000" stroke-width="1.6"/>
<line x1="439" y1="103" x2="443.5" y2="108.5" stroke="#000" stroke-width="2.3"/>
<path d="M434.8,94.8 L434.8,102.2 M431.2,98.5 L438.4,98.5" stroke="#000" stroke-width="2.6"/><rect x="432" y="90.5" width="6" height="2" fill="#000"/>
<path d="M431,97 L432.5,94.5" stroke="#00e0ff" stroke-width="1"/>
<polygon points="455,91.5 461,91.5 464,95 464,101.5 461,105 455,105 452.5,101.5 452.5,95" fill="#fff" stroke="#000" stroke-width="1.6"/>
<line x1="462" y1="103" x2="466.5" y2="108.5" stroke="#000" stroke-width="2"/>
<path d="M454,98.5 L462,98.5" stroke="#000" stroke-width="2.6"/><rect x="455" y="90.5" width="6" height="2" fill="#000"/>
<path d="M454,97 L455.5,94.5 M461,102 L462.5,100" stroke="#00e0ff" stroke-width="1"/>
<polygon points="478,91.5 484,91.5 487,95 487,101.5 484,105 478,105 475.5,101.5 475.5,95" fill="#fff" stroke="#000" stroke-width="1.6"/>
<line x1="485" y1="103" x2="489.5" y2="108.5" stroke="#000" stroke-width="2"/>
<rect x="478" y="90.5" width="6" height="2" fill="#000"/><rect x="476.5" y="94.5" width="9" height="7" fill="#fff" stroke="#0000a0" stroke-width="1"/>
<path d="M478.5,100 L480,97.5 L481,100 L482.5,97 L484,100" stroke="#ff0000" stroke-width="1" fill="none"/>
<!-- brain -->
<path d="M503.5,97 L506,93.5 L511,93 L515,96 L516.5,101 L514.5,105 L512,106.5 L512,109.5 L508,109.5 L507,106 L503.5,102 Z" fill="url(#gchk)" stroke="#a0a0a0" stroke-width="1.4"/>
<path d="M505,99 L515,99 M509,94 L509,108 M506,103 L514,103" stroke="#a8a8a8" stroke-width="1" stroke-dasharray="1 1"/>
</g>
<!-- F -->
<path d="M526,91 L539,91 L539,96.5 L538,96.5 Q537.3,93 534,93 L531,93 L531,98.6 L534,98.6 Q535,98.6 535.4,96.2 L536.5,96.2 L536.5,102.3 L535.4,102.3 Q535,99.9 534,99.9 L531,99.9 L531,106 L533.5,106.4 L533.5,108 L526,108 L526,106.4 L528.5,106 L528.5,93 L526,92.8 Z" fill="#000" shape-rendering="auto"/>
</g>
</g><g id="titlebar" shape-rendering="auto">
<!-- app icon -->
<rect x="10" y="19" width="20" height="25" fill="#000" shape-rendering="crispEdges"/>
<rect x="11" y="21" width="18" height="3" fill="#0000ff" shape-rendering="crispEdges"/>
<rect x="11" y="24" width="18" height="2" fill="#202020" shape-rendering="crispEdges"/>
<rect x="11" y="26" width="18" height="17" fill="#f4f4f4" shape-rendering="crispEdges"/>
<rect x="15" y="27" width="13" height="1.5" fill="#b0b0b0" shape-rendering="crispEdges"/>
<rect x="11" y="41" width="18" height="1" fill="#c8c8c8" shape-rendering="crispEdges"/>
<rect x="15" y="30" width="12" height="10" fill="#000" shape-rendering="crispEdges"/>
<rect x="16" y="31" width="10" height="8" fill="#00ffff" shape-rendering="crispEdges"/>
<rect x="16" y="31" width="10" height="1" fill="#003030" shape-rendering="crispEdges"/><path d="M18,36.5 L19.5,34 L22.5,33.5 L24.5,35 L24.5,36.5" fill="none" stroke="#004040" stroke-width="1.3"/><rect x="16" y="38" width="10" height="1" fill="#006060" shape-rendering="crispEdges"/>
<rect x="13" y="32" width="1" height="1" fill="#bbb"/><rect x="13" y="35" width="1" height="1" fill="#bbb"/><rect x="13" y="38" width="1" height="1" fill="#bbb"/>
<!-- min button -->
<defs>
<linearGradient id="gBtn" x1="0" y1="0" x2="0" y2="1">
<stop offset="0" stop-color="#c5d8ec"/><stop offset="0.42" stop-color="#b9cfe6"/><stop offset="0.43" stop-color="#94afcc"/><stop offset="0.75" stop-color="#9eb8d5"/><stop offset="1" stop-color="#b6cde6"/>
</linearGradient>
<linearGradient id="gClose" x1="0" y1="0" x2="0" y2="1">
<stop offset="0" stop-color="#e9a99b"/><stop offset="0.42" stop-color="#d98a78"/><stop offset="0.43" stop-color="#c0422a"/><stop offset="0.75" stop-color="#c85a43"/><stop offset="1" stop-color="#dc8a75"/>
</linearGradient>
<linearGradient id="gGlyph" x1="0" y1="0" x2="0" y2="1">
<stop offset="0" stop-color="#ffffff"/><stop offset="1" stop-color="#dcdcdc"/>
</linearGradient>
</defs>
<rect x="814.5" y="17.5" width="42" height="28" rx="3" fill="url(#gBtn)" stroke="#50607a" stroke-width="1"/>
<rect x="815.5" y="18.5" width="40" height="26" rx="2" fill="none" stroke="#e8f0f8" stroke-opacity="0.8" stroke-width="1"/>
<rect x="826.5" y="29.5" width="17" height="7" rx="1" fill="url(#gGlyph)" stroke="#3c4252" stroke-width="1.3"/>
<rect x="859.5" y="17.5" width="41" height="28" rx="3" fill="url(#gBtn)" stroke="#50607a" stroke-width="1"/>
<rect x="860.5" y="18.5" width="39" height="26" rx="2" fill="none" stroke="#e8f0f8" stroke-opacity="0.8" stroke-width="1"/>
<path d="M871.5,22.5 h16 v17 h-16 z M875,27 v7.5 h9 v-7.5 z" fill="url(#gGlyph)" fill-rule="evenodd" stroke="#3c4252" stroke-width="1.2"/>
<rect x="903.5" y="17.5" width="41" height="28" rx="3" fill="url(#gClose)" stroke="#5a1010" stroke-width="1"/>
<rect x="904.5" y="18.5" width="39" height="26" rx="2" fill="none" stroke="#f4c0b0" stroke-opacity="0.7" stroke-width="1"/>
<path d="M915.6,22.4 L919.6,22.4 L923.3,26.8 L927,22.4 L931.4,22.4 L931.6,25.3 L927.7,30.4 L931.6,34.9 L931.6,39.1 L927,39.3 L923.3,34.5 L919.6,39.3 L915.4,39.3 L915.2,34.9 L919.2,30.4 L915.2,25.3 Z" fill="url(#gGlyph)" stroke="#3c4252" stroke-width="1.2" stroke-linejoin="round"/>
</g>
<g shape-rendering="crispEdges">
<rect x="48" y="140" width="869" height="1" fill="#808080"/>
<rect x="48" y="140" width="1" height="744" fill="#808080"/>
<rect x="916" y="140" width="1" height="744" fill="#808080"/>
<rect x="49" y="264" width="867" height="1" fill="#0000ff"/>
<line x1="384.5" y1="141" x2="384.5" y2="884" stroke="#808080" stroke-width="1" stroke-dasharray="4 3"/>
<polyline fill="none" stroke="#ff0000" stroke-width="1" points="48.0,374.0 56.0,308.7 67.0,599.0 106.0,321.7 115.4,600.0 156.4,316.9 165.7,599.0 203.4,316.9 214.6,599.0 254.3,315.4 263.6,598.0 302.0,318.0 312.0,598.0 350.5,319.0 362.5,598.0 401.6,315.4 412.0,598.0 450.6,315.4 461.0,598.0 499.5,306.8 509.6,598.0 548.7,306.8 558.0,598.0 598.0,314.0 608.5,598.0 647.8,305.7 657.8,598.0 696.3,314.3 707.0,598.0 745.5,310.5 756.0,598.0 794.3,319.0 804.8,598.0 844.0,318.0 854.4,598.0 893.2,313.5 903.7,598.0 916.0,504.5"/>
<rect x="600" y="347" width="2" height="40" fill="#ff0000"/>
<rect x="840" y="330" width="2" height="9" fill="#ff0000"/>
<rect x="359" y="555" width="2" height="23" fill="#ff0000"/>
<rect x="119" y="572" width="1" height="8" fill="#ff0000"/>
<line x1="388" y1="264.5" x2="413" y2="264.5" stroke="#000080" stroke-dasharray="3 3"/>
<line x1="405" y1="315.5" x2="413" y2="315.5" stroke="#000080" stroke-dasharray="3 3"/>
<rect x="413" y="268" width="1" height="12" fill="#000080"/>
<rect x="413" y="300" width="1" height="12" fill="#000080"/>
<polygon points="413.5,264 410.5,270 416.5,270" fill="#000080"/>
<polygon points="413.5,316 410.5,310 416.5,310" fill="#000080"/>
<line x1="500" y1="308.5" x2="510" y2="308.5" stroke="#000080" stroke-dasharray="3 1"/>
<rect x="510" y="312" width="1" height="131" fill="#000080"/>
<rect x="510" y="463" width="1" height="131" fill="#000080"/>
<polygon points="510.5,308 507.5,314 513.5,314" fill="#000080"/>
<polygon points="510.5,598 507.5,592 513.5,592" fill="#000080"/>
</g>
<path fill="none" stroke="#4040d0" stroke-width="3.2" stroke-linejoin="round" stroke-linecap="round"
 d="M890,220 L855,220 L853.75,219.25 L845,219.25 L842.5,218 L821.25,218 L816.25,215.5 L640,215.5 L635,216.2 L600,216.2 L595,218 L582.5,219.2 L572.5,221.2 L532.5,221.2 L507.5,220 L480,218.7 L452.5,218 L447.5,216.2 L431.7,216.7 L430.75,222.7 L428.6,227 L426.5,236.2 L424.3,239.8 L422.2,242.7 L440,242.4 L442.9,246.2 L445,252 L446.2,259 L446.2,303.3 L445.4,311.8 L442.9,318.2 L438.6,324 L432.9,331.8 L406.5,331.8 L399.4,329.7 L393,325.4 L386.5,322.5 L380.1,317.5 L375.1,310.4 L373,303.3 L373.7,287.6 L375.8,279 L379.4,271.9 L385.8,264.8 L393,259.8 L398.7,254.8 L402.9,252 L410,248.4 L416.5,247.7 L420.8,246.2 L422.9,245.5"/>
</svg>
<div class="a" id="title">Анализ переходных процессов Transient analysis</div>
<div class="a" id="fname">стабилизаторV4.cir</div>
<div class="a ylab" style="left:0;width:47px;top:133px;">1.238</div>
<div class="a ylab" style="left:0;width:47px;top:258px;">0.000</div>
<div class="a note" id="n1">минимальное падение на регулирующем транзисторе</div>
<div class="a note" id="n2">0,5в при токе 8А</div>
<div class="a note" id="n3">Пульсации на входе</div>
<div class="a note" id="n4">стабилизатора&nbsp;&nbsp; 2,89в при токе 8А</div>
<div class="a meas" style="left:389px;top:283px;">506.426m</div>
<div class="a meas" style="left:497px;top:446px;">2.869</div>
<div class="a" id="tip"></div>
<div class="a" id="tipt">497.815m,-4.824</div>
</body></html>
